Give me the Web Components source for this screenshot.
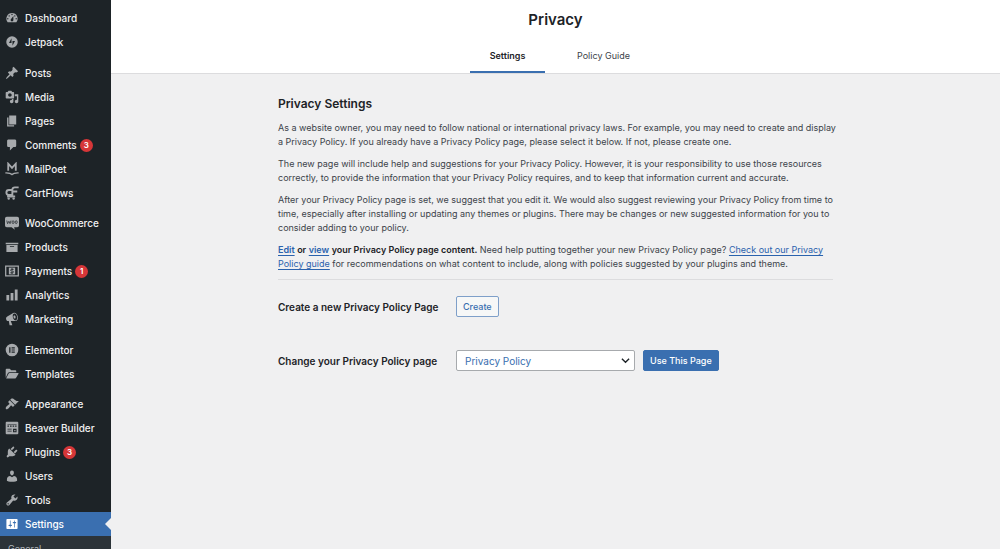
<!DOCTYPE html>
<html lang="en">
<head>
<meta charset="utf-8">
<title>Privacy</title>
<style>
  body { margin: 0; font-family: Inter, sans-serif; font-size: 9px; color: #3c434a; background: #f0f0f1; }
</style>
</head>
<body>
<admin-layout>
  <admin-menu slot="menu">
    <menu-group>
      <menu-item icon="dashboard">Dashboard</menu-item>
      <menu-item icon="jetpack">Jetpack</menu-item>
    </menu-group>
    <menu-group plugin>
      <menu-item icon="post">Posts</menu-item>
      <menu-item icon="media">Media</menu-item>
      <menu-item icon="page">Pages</menu-item>
      <menu-item icon="comments" count="3">Comments</menu-item>
      <menu-item icon="mailpoet">MailPoet</menu-item>
      <menu-item icon="cartflows">CartFlows</menu-item>
    </menu-group>
    <menu-group>
      <menu-item icon="woo">WooCommerce</menu-item>
      <menu-item icon="products">Products</menu-item>
      <menu-item icon="payments" count="1">Payments</menu-item>
      <menu-item icon="analytics">Analytics</menu-item>
      <menu-item icon="marketing">Marketing</menu-item>
    </menu-group>
    <menu-group plugin>
      <menu-item icon="elementor">Elementor</menu-item>
      <menu-item icon="templates">Templates</menu-item>
    </menu-group>
    <menu-group>
      <menu-item icon="appearance">Appearance</menu-item>
      <menu-item icon="beaver">Beaver Builder</menu-item>
      <menu-item icon="plugins" count="3">Plugins</menu-item>
      <menu-item icon="users">Users</menu-item>
      <menu-item icon="tools">Tools</menu-item>
      <menu-item icon="settings" current>Settings</menu-item>
      <sub-menu>General</sub-menu>
    </menu-group>
  </admin-menu>
  <privacy-header slot="header"></privacy-header>
  <privacy-settings></privacy-settings>
</admin-layout>

<script>
const ICONS = {
  dashboard: '<path d="M3.76 16h12.48A7.998 7.998 0 0 0 10 3a7.998 7.998 0 0 0-6.24 13zM10 4c.55 0 1 .45 1 1s-.45 1-1 1-1-.45-1-1 .45-1 1-1zM6 6c.55 0 1 .45 1 1s-.45 1-1 1-1-.45-1-1 .45-1 1-1zm8 0c.55 0 1 .45 1 1s-.45 1-1 1-1-.45-1-1 .45-1 1-1zm-5.37 5.55L12 7v6c0 1.1-.9 2-2 2s-2-.9-2-2c0-.57.24-1.08.63-1.45zM4 10c.55 0 1 .45 1 1s-.45 1-1 1-1-.45-1-1 .45-1 1-1zm12 0c.55 0 1 .45 1 1s-.45 1-1 1-1-.45-1-1 .45-1 1-1z"/>',
  jetpack: '<path fill-rule="evenodd" d="M10 1.8a8.2 8.2 0 1 0 0 16.4a8.2 8.2 0 1 0 0-16.4zM9.300 4.500v7H5.700zM10.700 15.500v-7h3.600z"/>',
  post: '<path d="M10.44 3.02l1.82-1.82 6.36 6.35-1.83 1.82c-1.05-.68-2.48-.57-3.41.36l-.75.75c-.92.93-1.04 2.35-.35 3.41l-1.83 1.82-2.41-2.41-2.8 2.79c-.42.42-3.38 2.71-3.8 2.29s1.86-3.39 2.28-3.81l2.79-2.79L4.1 9.36l1.83-1.82c1.05.69 2.48.57 3.4-.36l.75-.75c.93-.92 1.05-2.35.36-3.41z"/>',
  media: '<path d="M13 11V4c0-.55-.45-1-1-1h-1.67L9 1H5L3.67 3H2c-.55 0-1 .45-1 1v7c0 .55.45 1 1 1h10c.55 0 1-.45 1-1zM7 4.5c1.38 0 2.5 1.12 2.5 2.5S8.380 9.500 7 9.500 4.500 8.380 4.500 7 5.620 4.500 7 4.500zM14 6h5v10.500c0 1.380-1.120 2.500-2.500 2.500S14 17.880 14 16.500s1.120-2.500 2.500-2.500c.17 0 .34.02.5.05V9h-3V6zm-4 8.050V13h2v3.500c0 1.380-1.120 2.500-2.500 2.500S7 17.880 7 16.500 8.120 14 9.500 14c.17 0 .34.02.5.05z"/>',
  page: '<path d="M6 15V2h10v13H6zm-1 1h8v2H3V5h2v11z"/>',
  comments: '<path d="M5 2h9c1.100 0 2 .9 2 2v7c0 1.100-.9 2-2 2h-2l-5 5v-5H5c-1.100 0-2-.9-2-2V4c0-1.100.9-2 2-2z"/>',
  mailpoet: '<path fill="none" stroke="currentColor" stroke-width="2.600" d="M4.600 12.500V2.500L10 8.500l5.400-6v10"/><path fill="none" stroke="currentColor" stroke-width="2" d="M.5 15.500c3 .2 7 0 9.500 2.500c2.500-2.500 6.500-2.300 9.500-2.500"/>',
  cartflows: '<path fill="none" stroke="currentColor" stroke-width="2.700" d="M9.500 5.800H5.500a3.400 3.400 0 0 0 0 7H10.500V5.500c0-2.300 1.400-3.600 3.500-3.600h5.500M10.500 7.900h7M3 15h11.500"/><circle cx="5.300" cy="18" r="1.700"/><circle cx="12.300" cy="18" r="1.700"/>',
  woo: '<path d="M2.500 1h15A2.500 2.500 0 0 1 20 3.500v10a2.500 2.500 0 0 1-2.500 2.500H13l1 3.500-4.500-3.500h-7A2.500 2.500 0 0 1 0 13.500v-10A2.500 2.500 0 0 1 2.500 1z"/><path fill="none" stroke="#1d2327" stroke-width="1" d="M2.500 6.500l1.200 4.500L5.600 7.500l1.600 3.500L8.500 6.500"/><ellipse cx="11.500" cy="8.800" rx="1.500" ry="2" fill="none" stroke="#1d2327" stroke-width="1"/><ellipse cx="16" cy="8.800" rx="1.500" ry="2" fill="none" stroke="#1d2327" stroke-width="1"/>',
  products: '<path d="M19 4v2H1V4h18zM2 7h16v10H2V7zm11 3V9H7v1h6z"/>',
  payments: '<path fill="none" stroke="currentColor" stroke-width="1.800" d="M1 2.900h18v14.200H1z"/><path d="M5.500 5.200h9v9.600h-9z"/><path fill="none" stroke="#1d2327" stroke-width="1.400" d="M12.200 7.700H9.400a1.200 1.200 0 0 0 0 2.400h1.300a1.200 1.200 0 0 1 0 2.400H7.800M10 6v1.700M10 12.500v1.700"/>',
  analytics: '<path d="M18 18V2h-4v16h4zm-6 0V7H8v11h4zm-6 0v-8H2v8h4z"/>',
  marketing: '<path d="M18.150 5.940c.46 1.620.38 3.220-.02 4.480-.42 1.280-1.260 2.180-2.300 2.480-.16.06-.26.06-.4.06-.06.02-.12.02-.18.02-.06.02-.14.02-.22.02h-6.800l2.220 5.500c.02.14-.06.26-.14.34-.08.1-.24.16-.34.16H6.950c-.1 0-.26-.06-.34-.16-.08-.08-.16-.2-.14-.34l-1-5.500H4.250l-.02-.02c-.5.06-1.080-.18-1.540-.62s-.88-1.080-1.060-1.880c-.24-.8-.2-1.560-.02-2.200.18-.62.58-1.080 1.060-1.300l.02-.02 9-5.400c.1-.06.18-.1.24-.16.06-.04.14-.08.24-.12.16-.08.28-.12.5-.18 1.040-.3 2.240.1 3.220.98s1.840 2.240 2.260 3.860zm-2.580 5.980h-.02c.4-.1.74-.34 1.040-.7.58-.7.86-1.760.86-3.040 0-.64-.1-1.300-.28-1.980-.34-1.360-1.020-2.500-1.780-3.240s-1.680-1.100-2.460-.88c-.82.22-1.400.96-1.700 2-.32 1.040-.28 2.360.06 3.720.38 1.360 1 2.500 1.800 3.240.78.74 1.620 1.100 2.480.88zm-2.540-7.080c.22-.04.42-.02.62.04.38.16.76.48 1.020 1s.42 1.200.42 1.780c0 .3-.04.56-.12.8-.18.48-.44.84-.86.94-.34.1-.8-.06-1.140-.4s-.64-.86-.78-1.500c-.18-.62-.12-1.240.02-1.720s.48-.84.82-.94z"/>',
  elementor: '<path fill-rule="evenodd" d="M10 1a9 9 0 1 0 0 18a9 9 0 1 0 0-18zM6 6h1.800v8H6zM9.400 6H14v1.700H9.400zM9.400 9.150H14v1.700H9.400zM9.400 12.300H14V14H9.400z"/>',
  templates: '<path d="M1 15.500V3.800C1 3 1.500 2.500 2.300 2.500h4.500l2 2h6c.8 0 1.300.5 1.300 1.300v1.700H6.500c-1.200 0-1.900.4-2.500 1.400z"/><path d="M5.200 9.300c.3-.5.7-.8 1.300-.8h12.300c.6 0 .8.5.5 1l-3.400 6c-.3.500-.8.8-1.400.8H1.600z"/>',
  appearance: '<path d="M14.480 11.060L7.410 3.990l1.500-1.500c.5-.56 2.300-.47 3.510.32 1.210.8 1.430 1.280 2.910 2.100 1.180.64 2.450 1.260 4.450.85zm-.71.71L6.700 4.700 4.930 6.470c-.39.39-.39 1.020 0 1.410l1.060 1.060c.39.39.39 1.030 0 1.420-.6.6-1.430 1.110-2.210 1.690-.35.26-.7.53-1.010.84C1.430 14.230.4 16.080 1.400 17.070c.99 1 2.840-.03 4.180-1.360.31-.31.58-.66.85-1.020.57-.78 1.080-1.610 1.690-2.210.39-.39 1.020-.39 1.410 0l1.060 1.060c.39.39 1.020.39 1.410 0z"/>',
  beaver: '<path fill-rule="evenodd" d="M2.500 1h15A1.500 1.500 0 0 1 19 2.500v15a1.500 1.500 0 0 1-1.500 1.500h-15A1.500 1.500 0 0 1 1 17.500v-15A1.500 1.500 0 0 1 2.500 1zM3.500 4.500v1h13v-1zM3.500 6.300v2h2.200v-2zM7.200 6.300v2h2.200v-2zM10.900 6.300v2h2.200v-2zM14.500 6.300v2h2v-2zM3.500 11.200v1h6v-1zM3.500 14v1h6v-1zM11.500 11v5.200h5V11zM13.200 12.700h1.800v1.800h-1.800z"/>',
  plugins: '<path d="M13.110 4.360L9.870 7.600 8 5.730l3.240-3.240c.35-.34 1.050-.2 1.560.32.52.51.66 1.210.31 1.550zm-8 1.770l.91-1.120 9.010 9.010-1.190.84c-.71.71-2.630 1.160-3.820 1.160H6.140L4.900 17.260c-.59.59-1.540.59-2.120 0-.59-.58-.59-1.530 0-2.120l1.240-1.240v-3.880c0-1.130.4-3.190 1.090-3.890zm7.260 3.970l3.240-3.240c.34-.35 1.040-.21 1.550.31.52.51.66 1.210.31 1.550l-3.240 3.250z"/>',
  users: '<path d="M10 9.250c-2.270 0-2.730-3.440-2.730-3.440C7 4.020 7.820 2 9.970 2c2.160 0 2.980 2.020 2.710 3.810 0 0-.41 3.440-2.680 3.440zm0 2.570L12.720 10c2.390 0 4.520 2.330 4.520 4.530v2.490s-3.650 1.130-7.240 1.130c-3.650 0-7.240-1.130-7.240-1.130v-2.490c0-2.250 1.940-4.480 4.470-4.480z"/>',
  tools: '<path d="M16.680 9.770c-1.340 1.340-3.300 1.670-4.950.99l-5.410 6.520c-.99.99-2.590.99-3.580 0s-.99-2.590 0-3.570l6.520-5.420c-.68-1.650-.35-3.610.99-4.950 1.280-1.280 3.120-1.620 4.720-1.060l-2.890 2.890 2.820 2.820 2.860-2.870c.53 1.580.18 3.390-1.080 4.650zM3.810 16.210c.4.39 1.040.39 1.430 0 .4-.4.4-1.040 0-1.430-.39-.4-1.030-.4-1.430 0-.39.39-.39 1.030 0 1.430z"/>',
  settings: '<path d="M18 16V4c0-.55-.45-1-1-1H3c-.55 0-1 .45-1 1v12c0 .55.45 1 1 1h14c.55 0 1-.45 1-1zM8 11h1c.55 0 1 .45 1 1s-.45 1-1 1H8v1.500c0 .28-.22.5-.5.5s-.5-.22-.5-.5V13H6c-.55 0-1-.45-1-1s.45-1 1-1h1V5.500c0-.28.22-.5.5-.5s.5.22.5.5V11zm5-2h-1c-.55 0-1-.45-1-1s.45-1 1-1h1V5.500c0-.28.22-.5.5-.5s.5.22.5.5V7h1c.55 0 1 .45 1 1s-.45 1-1 1h-1v5.500c0 .28-.22.5-.5.5s-.5-.22-.5-.5V9z"/>'
};

function define(name, html) {
  customElements.define(name, class extends HTMLElement {
    constructor() {
      super();
      this.attachShadow({ mode: 'open' }).innerHTML = html;
    }
  });
}

define('admin-layout', `
  <style>
    :host { display: grid; grid-template-columns: 111px 1fr; height: 100vh; }
    ::slotted([slot=menu]) { min-height: 0; }
    .content { overflow: auto; scrollbar-width: none; }
  </style>
  <slot name="menu"></slot>
  <div class="content">
    <slot name="header"></slot>
    <main><slot></slot></main>
  </div>`);

define('admin-menu', `
  <style>
    :host { display: block; background: #1d2327; overflow: hidden; }
    nav { padding-top: 6px; }
  </style>
  <nav aria-label="Main menu"><slot></slot></nav>`);

define('menu-group', `
  <style>
    :host { display: block; margin-bottom: 7px; }
    :host([plugin]) { margin-bottom: 6px; }
  </style>
  <slot></slot>`);

define('sub-menu', `
  <style>
    :host { display: block; background: #2c3338; padding: 5px 0; }
    a { display: block; padding: 0 8px; font-size: 9px; line-height: 16px; color: #b4b9be; text-decoration: none; }
  </style>
  <a href="#general"><slot></slot></a>`);

customElements.define('menu-item', class extends HTMLElement {
  constructor() {
    super();
    const icon = this.getAttribute('icon');
    const count = this.getAttribute('count');
    this.attachShadow({ mode: 'open' }).innerHTML = `
      <style>
        :host { display: block; }
        a { display: flex; align-items: center; height: 24px; padding-left: 5px; color: #f0f0f1;
            font-size: 10px; font-weight: 500; line-height: 14px; text-decoration: none; white-space: nowrap; }
        svg { width: 14px; height: 14px; margin-right: 6px; color: #a7aaad; fill: currentColor; flex: none; }
        .count { margin-left: 3px; width: 13px; height: 13px; border-radius: 50%; background: #d63638;
                 color: #fff; font-size: 8px; line-height: 13px; font-weight: 600; text-align: center; }
        :host([current]) a { position: relative; background: #3a6fb0; color: #fff; }
        :host([current]) svg { color: #fff; }
        :host([current]) a::after { content: ""; position: absolute; right: 0; top: 6px;
            border: 6px solid transparent; border-right-color: #f0f0f1; border-left-width: 0; }
      </style>
      <a href="#${icon}"${this.hasAttribute('current') ? ' aria-current="page"' : ''}>
        <svg viewBox="0 0 20 20" aria-hidden="true">${ICONS[icon]}</svg>
        <slot></slot>${count ? `<span class="count">${count}</span>` : ''}
      </a>`;
  }
});

define('privacy-header', `
  <style>
    :host { display: block; background: #fff; border-bottom: 1px solid #dcdcde; text-align: center; }
    h1 { margin: 0; padding: 9px 0 15px; font-size: 15px; line-height: 22px; font-weight: 600; color: #1d2327; }
    nav { display: inline-grid; grid-template-columns: 1fr 1fr; gap: 21px; vertical-align: top; }
    a { padding: 3px 11px 8px; line-height: 14px; color: #3c434a; text-decoration: none; border-bottom: 2px solid transparent; }
    a[aria-current] { font-weight: 600; color: #1d2327; border-color: #3a6fb0; }
  </style>
  <header>
    <h1>Privacy</h1>
    <nav aria-label="Secondary menu">
      <a href="#settings" aria-current="page">Settings</a>
      <a href="#guide">Policy Guide</a>
    </nav>
  </header>`);

define('privacy-settings', `
  <style>
    :host { display: block; max-width: 555px; margin: 0 auto; padding: 21px 0; line-height: 14px; }
    h2 { margin: 0 0 8px; font-size: 12px; line-height: 18px; font-weight: 600; color: #1d2327; }
    p { margin: 0 -6px 8px 0; }
    b { font-weight: 600; color: #1d2327; }
    a { color: #2a62ad; text-decoration-thickness: 1px; text-underline-offset: 2px; }
    a.strong { font-weight: 600; }
    hr { margin: 0 0 16px; border: 0; border-top: 1px solid #dcdcde; }
    form { display: grid; grid-template-columns: 170px 1fr; align-items: center; column-gap: 8px; row-gap: 33px; }
    label { font-size: 10px; font-weight: 600; color: #1d2327; }
    .field { display: flex; gap: 8px; }
    button, select { box-sizing: border-box; height: 21px; margin: 0; border: 1px solid #7e9fc9; border-radius: 2px;
      font: 500 9px/14px Inter, sans-serif; color: #3a6fb0; background: #f6f7f7; }
    button { padding: 0 6px; }
    .primary { background: #3a6fb0; border-color: #3a6fb0; color: #fff; }
    .select { display: grid; align-items: center; }
    .select > * { grid-area: 1 / 1; }
    select { appearance: none; width: 179px; padding: 0 20px 0 8px; border-color: #a7aaad; background: #fff;
      font-size: 10px; font-weight: 400; }
    svg { justify-self: end; width: 9px; height: 9px; margin-right: 5px; fill: none; stroke: #1d2327; stroke-width: 1.5; pointer-events: none; }
  </style>
  <h2>Privacy Settings</h2>
  <p>As a website owner, you may need to follow national or international privacy laws. For example, you may need to create and display a Privacy Policy. If you already have a Privacy Policy page, please select it below. If not, please create one.</p>
  <p>The new page will include help and suggestions for your Privacy Policy. However, it is your responsibility to use those resources correctly, to provide the information that your Privacy Policy requires, and to keep that information current and accurate.</p>
  <p>After your Privacy Policy page is set, we suggest that you edit it. We would also suggest reviewing your Privacy Policy from time to time, especially after installing or updating any themes or plugins. There may be changes or new suggested information for you to consider adding to your policy.</p>
  <p><a class="strong" href="#edit">Edit</a> <b>or</b> <a class="strong" href="#view">view</a> <b>your Privacy Policy page content.</b> Need help putting together your new Privacy Policy page? <a href="#guide">Check out our Privacy Policy guide</a> for recommendations on what content to include, along with policies suggested by your plugins and theme.</p>
  <hr>
  <form>
    <label for="create">Create a new Privacy Policy Page</label>
    <div class="field"><button type="button" id="create">Create</button></div>
    <label for="page">Change your Privacy Policy page</label>
    <div class="field">
      <div class="select">
        <select id="page"><option>Privacy Policy</option></select>
        <svg viewBox="0 0 10 10" aria-hidden="true"><path d="M1 3l4 4 4-4"/></svg>
      </div>
      <button type="button" class="primary">Use This Page</button>
    </div>
  </form>`);
</script>
</body>
</html>
